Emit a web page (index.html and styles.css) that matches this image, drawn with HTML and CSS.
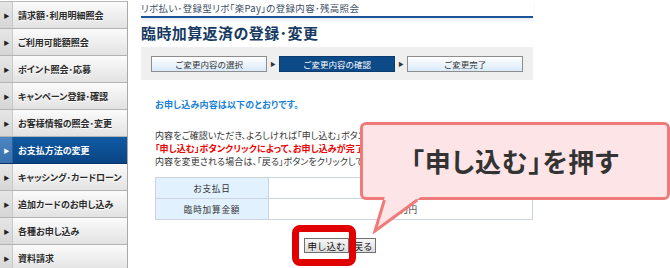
FILE: index.html
```html
<!DOCTYPE html>
<html lang="ja">
<head>
<meta charset="utf-8">
<title>臨時加算返済の登録・変更</title>
<link rel="stylesheet" href="styles.css">
</head>
<body>
<div class="page">
  <nav class="sidebar">
    <a class="nav-item"><span class="strip">▶</span><span class="label">請求額･利用明細照会</span></a>
    <a class="nav-item"><span class="strip">▶</span><span class="label">ご利用可能額照会</span></a>
    <a class="nav-item"><span class="strip">▶</span><span class="label">ポイント照会･応募</span></a>
    <a class="nav-item"><span class="strip">▶</span><span class="label">キャンペーン登録･確認</span></a>
    <a class="nav-item"><span class="strip">▶</span><span class="label">お客様情報の照会･変更</span></a>
    <a class="nav-item active"><span class="strip">▶</span><span class="label">お支払方法の変更</span></a>
    <a class="nav-item"><span class="strip">▶</span><span class="label">キャッシング･カードローン</span></a>
    <a class="nav-item"><span class="strip">▶</span><span class="label">追加カードのお申し込み</span></a>
    <a class="nav-item"><span class="strip">▶</span><span class="label">各種お申し込み</span></a>
    <a class="nav-item"><span class="strip">▶</span><span class="label">資料請求</span></a>
  </nav>

  <main class="main">
    <div class="breadcrumb">リボ払い･登録型リボ「楽Pay」の登録内容･残高照会</div>
    <h1 class="title">臨時加算返済の登録･変更</h1>

    <div class="steps">
      <div class="step">ご変更内容の選択</div>
      <span class="step-arrow">▶</span>
      <div class="step current">ご変更内容の確認</div>
      <span class="step-arrow">▶</span>
      <div class="step">ご変更完了</div>
    </div>

    <div class="content">
      <p class="lead">お申し込み内容は以下のとおりです。</p>
      <p class="notes">
        <span class="line">内容をご確認いただき、よろしければ「申し込む」ボタンを押してください。</span>
        <span class="line warn">「申し込む」ボタンクリックによって、お申し込みが完了します。</span>
        <span class="line">内容を変更される場合は、「戻る」ボタンをクリックしてください。</span>
      </p>

      <table class="detail">
        <tr><th>お支払日</th><td></td></tr>
        <tr><th>臨時加算金額</th><td class="amount">万円</td></tr>
      </table>

      <div class="actions">
        <button class="btn">申し込む</button>
        <button class="btn">戻る</button>
      </div>
    </div>
  </main>

  <div class="highlight"></div>

  <div class="callout">
    <span class="callout-text">「申し込む」を押す</span>
    <svg class="callout-tail" width="52" height="38" viewBox="0 0 52 38">
      <polygon points="13,0 50,0 3,35" fill="#fde4e7"/>
      <polyline points="12.4,4 3,35 45.3,4" fill="none" stroke="#f07a7a" stroke-width="3" stroke-linejoin="miter"/>
    </svg>
  </div>
</div>
</body>
</html>
```

FILE: styles.css
```css
* { box-sizing: border-box; }

html, body {
  margin: 0;
  padding: 0;
  background: #fff;
}

body {
  font-family: "Noto Sans CJK JP", "Noto Sans", sans-serif;
  color: #333;
  width: 670px;
  height: 268px;
  overflow: hidden;
}

.page {
  position: relative;
  display: flex;
  width: 670px;
  height: 268px;
}

/* Sidebar */
.sidebar {
  width: 128px;
  flex: none;
  display: flex;
  flex-direction: column;
  margin-top: 1px;
  border-top: 1px solid #b8b8b8;
  border-right: 1px solid #a9a9a9;
  overflow: hidden;
}

.nav-item {
  display: flex;
  align-items: stretch;
  height: 27px;
  flex: none;
  border-bottom: 1px solid #b3b3b3;
  background: linear-gradient(#fbfbfb, #ececec 60%, #e2e2e2);
  color: #2a2a2a;
  font-size: 9px;
  font-weight: bold;
  text-decoration: none;
  font-feature-settings: "palt";
}

.strip {
  width: 13px;
  flex: none;
  display: flex;
  align-items: center;
  justify-content: center;
  font-size: 6px;
  color: #222;
  padding-left: 1px;
  background: linear-gradient(#e6e6e6, #d6d6d6);
  border-right: 1px solid #c9c9c9;
}

.label {
  display: flex;
  align-items: center;
  padding-left: 5px;
  letter-spacing: 0;
  text-shadow: 0 1px 0 #fff;
  white-space: nowrap;
}

.nav-item.active {
  background: linear-gradient(#0f5aa3, #0a4585);
  color: #fff;
  border-bottom-color: #073366;
}

.nav-item.active .strip {
  background: linear-gradient(#4d86c2, #3670ad);
  border-right-color: #2a609a;
  color: #fff;
}

.nav-item.active .label {
  text-shadow: none;
}

/* Main */
.main {
  width: 392px;
  margin-left: 13px;
  display: flex;
  flex-direction: column;
}

.breadcrumb {
  height: 18px;
  line-height: 16px;
  font-size: 9.5px;
  color: #3c4e66;
  border-bottom: 2px solid #1b5596;
  box-shadow: 0 3px 3px rgba(120, 150, 190, 0.15);
  white-space: nowrap;
  font-feature-settings: "palt";
  letter-spacing: 0.3px;
}

.title {
  margin: 5px 0 4px;
  font-size: 15px;
  line-height: 20px;
  font-weight: bold;
  color: #173a63;
  letter-spacing: 0.4px;
}

.steps {
  height: 33px;
  background: #efefef;
  display: flex;
  align-items: center;
  padding: 0 10px;
}

.step {
  width: 116px;
  height: 16px;
  border: 1px solid #8d8d8d;
  background: linear-gradient(#ffffff, #d9eaf9);
  font-size: 8.5px;
  line-height: 14px;
  text-align: center;
  color: #333;
}

.step.current {
  background: #0d4a88;
  border-color: #0b3c70;
  color: #fff;
}

.step-arrow {
  width: 12px;
  text-align: center;
  font-size: 5.5px;
  color: #333;
}

.content {
  padding-left: 14px;
  font-feature-settings: "palt";
}

.lead {
  margin: 18px 0 0;
  font-size: 9px;
  line-height: 14px;
  font-weight: bold;
  color: #1a7fd6;
  letter-spacing: 0.2px;
}

.notes {
  margin: 17px 0 0;
  font-size: 9px;
  line-height: 13px;
  color: #333;
  letter-spacing: 0.1px;
}

.line {
  display: block;
  white-space: nowrap;
}

.warn {
  color: #f00000;
  font-weight: bold;
}

.detail {
  margin-top: 9px;
  width: 378px;
  border-collapse: collapse;
  font-size: 8.6px;
}

.detail th,
.detail td {
  border: 1px solid #cbd3de;
  height: 21px;
  padding: 0;
}

.detail th {
  width: 113px;
  background: #e1f1fd;
  font-weight: normal;
  color: #333;
  text-align: center;
  letter-spacing: 0.8px;
}

.detail td {
  background: #fff;
}

.detail .amount {
  padding-left: 131px;
  color: #333;
}

.actions {
  margin-top: 18px;
  display: flex;
  justify-content: center;
  gap: 2px;
  padding-right: 8px;
}

.btn {
  font-family: "Noto Sans CJK JP", sans-serif;
  font-size: 9.5px;
  height: 15px;
  line-height: 12px;
  padding: 0 2px;
  border: 1px solid #707070;
  background: linear-gradient(#f6f6f6, #dcdcdc);
  color: #111;
}

/* Overlays */
.highlight {
  position: absolute;
  left: 292px;
  top: 225px;
  width: 64px;
  height: 41px;
  border: 7px solid #e10000;
  border-radius: 8px;
}

.callout {
  position: absolute;
  left: 360px;
  top: 122px;
  width: 310px;
  height: 78px;
  background: #fde4e7;
  border: 3px solid #f07a7a;
  border-radius: 6px;
  display: flex;
  align-items: center;
  justify-content: center;
}

.callout-text {
  font-size: 26px;
  font-weight: bold;
  color: #333;
  font-feature-settings: "palt";
  letter-spacing: 0.8px;
  padding-bottom: 2px;
}

.callout-tail {
  position: absolute;
  left: 9px;
  top: 71px;
}
```
